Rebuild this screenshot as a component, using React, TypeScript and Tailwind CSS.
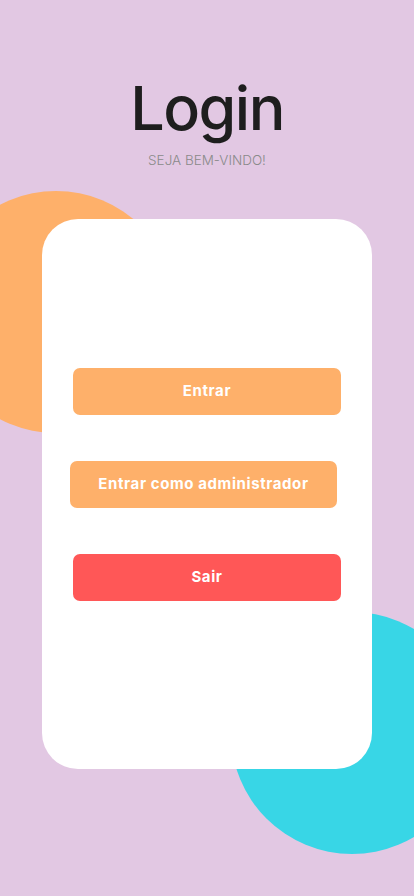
import React from 'react';

export default function App() {
    return (
        <div
            className="relative min-h-screen w-full overflow-hidden bg-[#e2c8e3]"
            style={{ fontFamily: 'Inter, "Open Sans", sans-serif' }}
        >
            {/* background blobs */}
            <div className="absolute left-[-65px] top-[191px] h-[242px] w-[242px] rounded-full bg-[#feb06a]" />
            <div className="absolute left-[231px] top-[612px] h-[242px] w-[242px] rounded-full bg-[#38d6e6]" />

            <div className="relative flex flex-col items-center pt-[78px]">
                <h1 className="text-[61px] font-medium leading-none tracking-[-1.5px] text-[#1e1e1e]">Login</h1>
                <p className="mt-[15px] text-[13.5px] font-light leading-none text-[#8a8a8a]">SEJA BEM-VINDO!</p>
            </div>

            <div className="relative mx-auto mt-[51px] flex h-[550px] w-[330px] flex-col rounded-[36px] bg-white pt-[149px]">
                <button className="mx-[31px] h-[47px] rounded-[7px] bg-[#feb06a] text-[15px] font-bold tracking-[0.6px] text-white">
                    Entrar
                </button>
                <button className="ml-[28px] mr-[35px] mt-[46px] h-[47px] rounded-[7px] bg-[#feb06a] text-[15px] font-bold tracking-[0.6px] text-white">
                    Entrar como administrador
                </button>
                <button className="mx-[31px] mt-[46px] h-[47px] rounded-[7px] bg-[#ff5757] text-[15px] font-bold tracking-[0.6px] text-white">
                    Sair
                </button>
            </div>
        </div>
    );
}
